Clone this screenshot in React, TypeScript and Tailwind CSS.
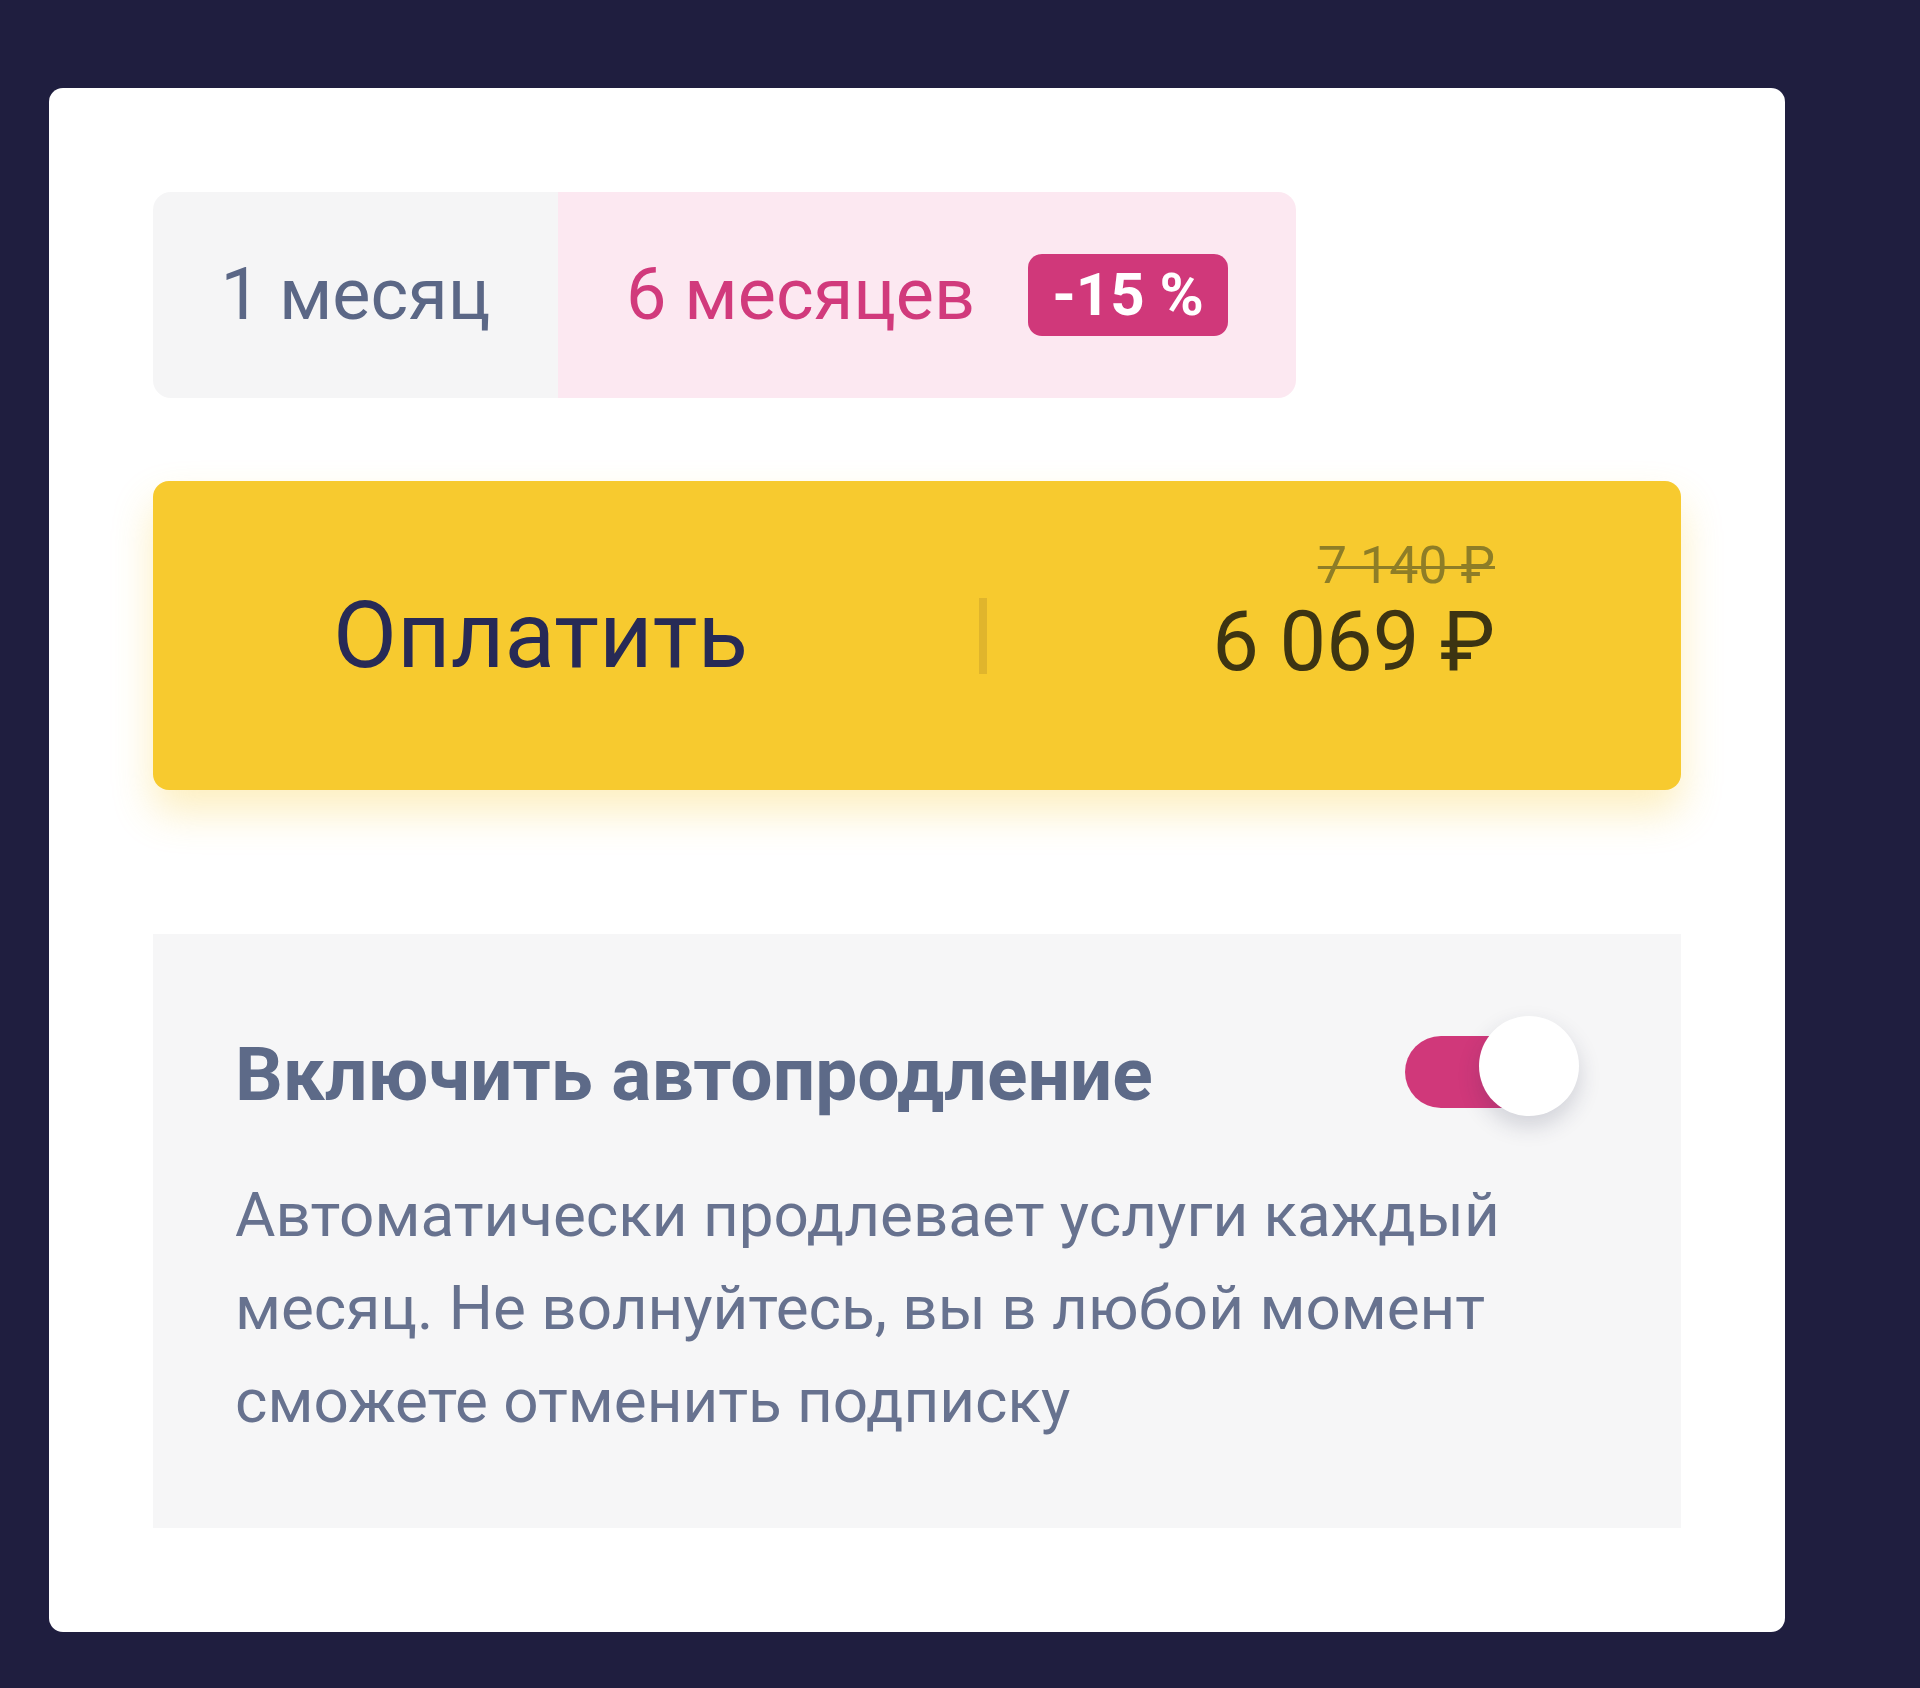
import { useState } from 'react';

export default function App() {
  const [period, setPeriod] = useState<1 | 6>(6);
  const [autoRenew, setAutoRenew] = useState<boolean>(true);

  return (
    <div
      className="min-h-[1688px] w-full bg-[#1f1e3f] pt-[88px] pl-[49px]"
      style={{ fontFamily: 'Roboto, "Noto Sans", sans-serif' }}
    >
      <div className="w-[1736px] rounded-[14px] bg-white p-[104px]">
        {/* Переключатель периода */}
        <div className="flex h-[206px] w-[1143px] overflow-hidden rounded-[18px]">
          <button
            onClick={() => setPeriod(1)}
            className={`flex w-[405px] items-center justify-center text-[72px] leading-none ${
              period === 1 ? 'bg-[#fce8f1] text-[#d13a7c]' : 'bg-[#f5f5f6] text-[#5b6786]'
            }`}
          >
            1 месяц
          </button>
          <button
            onClick={() => setPeriod(6)}
            className={`flex flex-1 items-center justify-center gap-[53px] ${
              period === 6 ? 'bg-[#fce8f1] text-[#d13a7c]' : 'bg-[#f5f5f6] text-[#5b6786]'
            }`}
          >
            <span className="text-[72px] leading-none">6 месяцев</span>
            <span className="flex h-[82px] items-center rounded-[14px] bg-[#d0387a] px-[24px] text-[60px] font-bold leading-none text-white">
              -15 %
            </span>
          </button>
        </div>

        {/* Кнопка оплаты */}
        <button className="mt-[83px] flex h-[309px] w-full items-center rounded-[16px] bg-[#f7ca2f] shadow-[0_22px_40px_rgba(247,202,47,0.3)]">
          <div className="w-[826px] pl-[180px] text-left text-[93px] leading-none text-[#272a56]">Оплатить</div>
          <div className="h-[76px] w-[8px] bg-[#e0b52c]" />
          <div className="flex flex-1 justify-end pr-[186px]">
            <div className="mb-[48px] flex flex-col items-end gap-[8px]">
              <span className="text-[52px] leading-none text-[#8e7d27] line-through decoration-[3px]">
                {period === 6 ? '7 140 ₽' : '1 190 ₽'}
              </span>
              <span className="text-[83px] leading-none text-[#3d3412]">{period === 6 ? '6 069 ₽' : '1 190 ₽'}</span>
            </div>
          </div>
        </button>

        {/* Автопродление */}
        <div className="mt-[144px] bg-[#f6f6f7] pt-[82px] pb-[81px] pl-[82px] pr-[102px]">
          <div className="flex h-[100px] items-center justify-between">
            <h3 className="mt-[16px] text-[75px] font-bold leading-none text-[#5d6a88]">Включить автопродление</h3>
            <button
              onClick={() => setAutoRenew(!autoRenew)}
              className="relative h-[100px] w-[174px]"
              aria-pressed={autoRenew}
            >
              <span
                className={`absolute top-[20px] left-0 h-[72px] w-[150px] rounded-full ${
                  autoRenew ? 'bg-[#d0387a]' : 'bg-[#d9dbe2]'
                }`}
              />
              <span
                className={`absolute top-0 h-[100px] w-[100px] rounded-full bg-white shadow-[0_10px_22px_rgba(40,45,80,0.18)] ${
                  autoRenew ? 'right-0' : 'left-0'
                }`}
              />
            </button>
          </div>
          <p className="mt-[52px] text-[62px] leading-[93px] text-[#67728f]">
            Автоматически продлевает услуги каждый месяц. Не волнуйтесь, вы в любой момент сможете отменить подписку
          </p>
        </div>
      </div>
    </div>
  );
}
